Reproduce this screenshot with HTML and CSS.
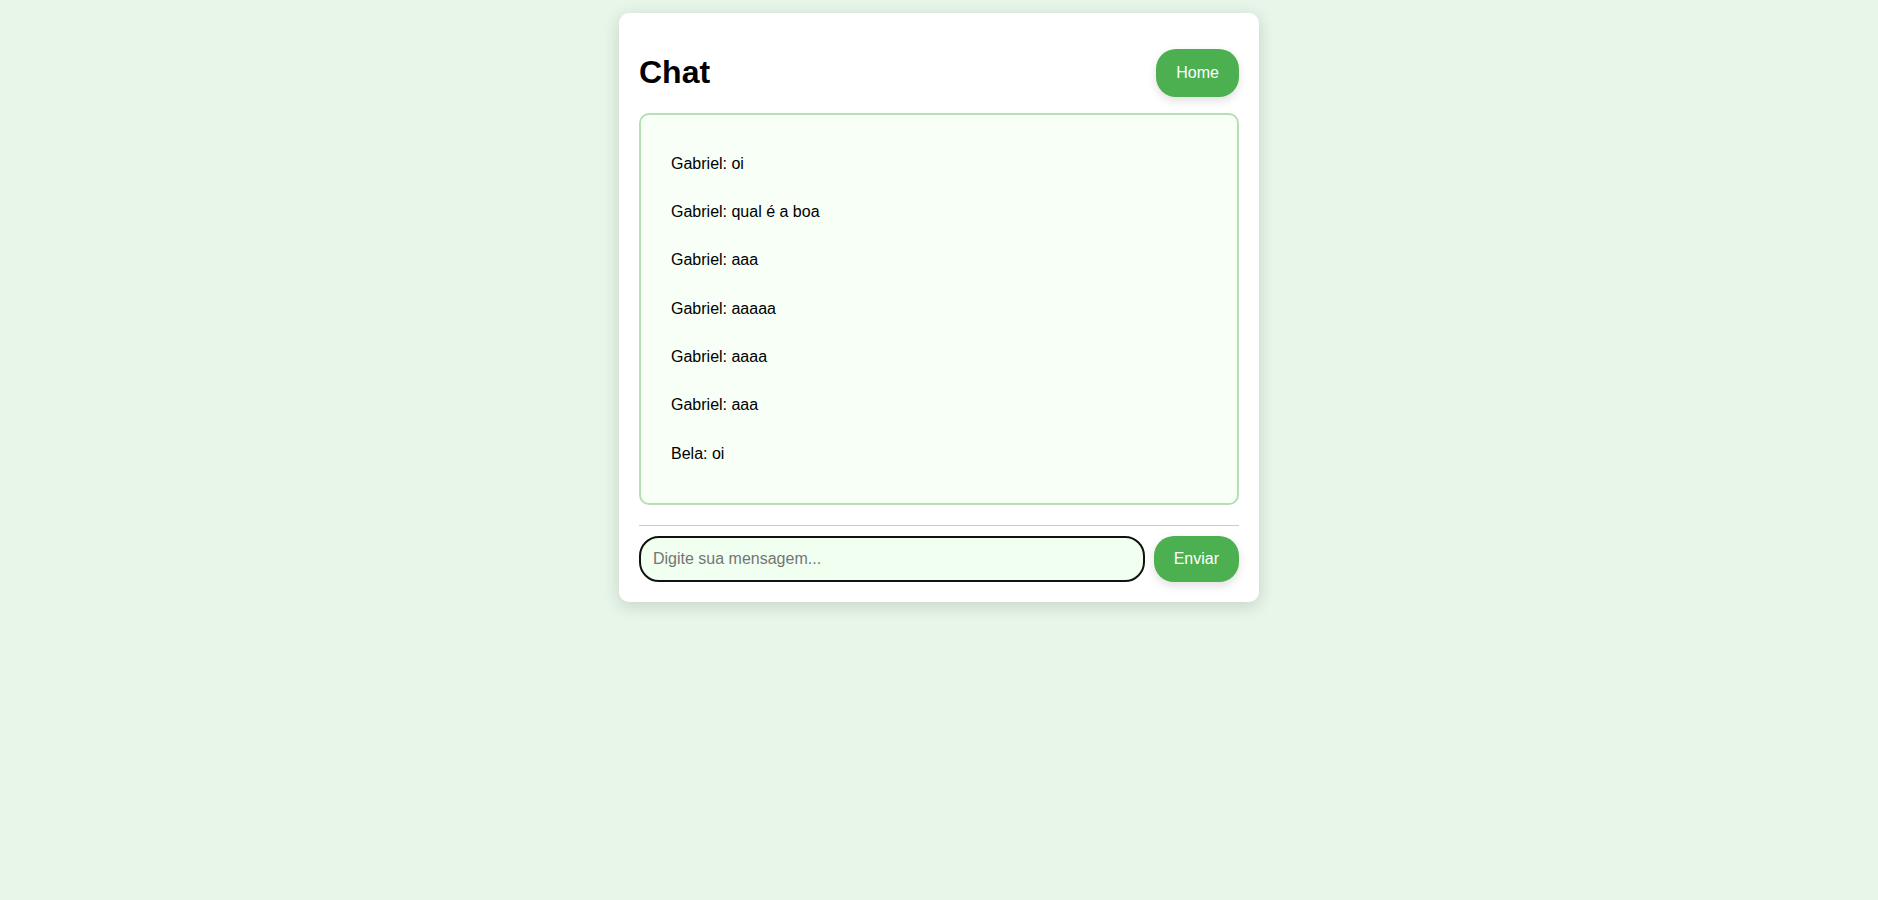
FILE: index.html
```html
<!DOCTYPE html>
<html lang="pt">
<head>
<meta charset="utf-8">
<title>Chat</title>
<link rel="stylesheet" href="styles.css">
</head>
<body>
<div class="card">
  <div class="header">
    <h1 class="title">Chat</h1>
    <button class="btn">Home</button>
  </div>
  <div class="chat-box">
    <div class="msg">Gabriel: oi</div>
    <div class="msg">Gabriel: qual é a boa</div>
    <div class="msg">Gabriel: aaa</div>
    <div class="msg">Gabriel: aaaaa</div>
    <div class="msg">Gabriel: aaaa</div>
    <div class="msg">Gabriel: aaa</div>
    <div class="msg">Bela: oi</div>
  </div>
  <div class="composer">
    <input class="input" type="text" placeholder="Digite sua mensagem...">
    <button class="btn">Enviar</button>
  </div>
</div>
</body>
</html>
```
FILE: styles.css
```css
html, body {
  margin: 0;
  padding: 0;
}
body {
  background: #e8f5e9;
  font-family: "Liberation Sans", Arial, sans-serif;
  font-size: 16px;
  color: #000;
  min-height: 900px;
  padding-top: 13px;
  box-sizing: border-box;
}
.card {
  width: 640px;
  box-sizing: border-box;
  margin: 0 auto;
  background: #fff;
  border-radius: 10px;
  padding: 20px;
  box-shadow: 0 4px 16px rgba(40, 70, 40, 0.18);
}
.header {
  display: flex;
  align-items: center;
  justify-content: space-between;
}
.title {
  font-size: 32px;
  font-weight: bold;
  margin: 21.44px 0;
}
.btn {
  font-family: "Liberation Sans", Arial, sans-serif;
  font-size: 16px;
  color: #fff;
  background: #4caf50;
  border: none;
  border-radius: 20px;
  padding: 15px 20px;
  line-height: 18px;
  box-shadow: 0 4px 10px rgba(0, 0, 0, 0.12);
  cursor: pointer;
}
.chat-box {
  border: 2px solid #b4e0b4;
  border-radius: 10px;
  background: #f7fff7;
  padding: 20px;
}
.msg {
  margin: 10px 0;
  padding: 10px;
  line-height: 18.3px;
}
.composer {
  display: flex;
  gap: 9px;
  margin-top: 20px;
  border-top: 1px solid #ccc;
  padding-top: 10px;
}
.input {
  flex: 1;
  font-family: "Liberation Sans", Arial, sans-serif;
  font-size: 16px;
  background: #f0fff0;
  border: 2px solid #111;
  border-radius: 20px;
  padding: 0 12px;
  outline: none;
}
.input::placeholder {
  color: #757575;
}
.composer .btn {
  padding: 14px 20px;
}
```
